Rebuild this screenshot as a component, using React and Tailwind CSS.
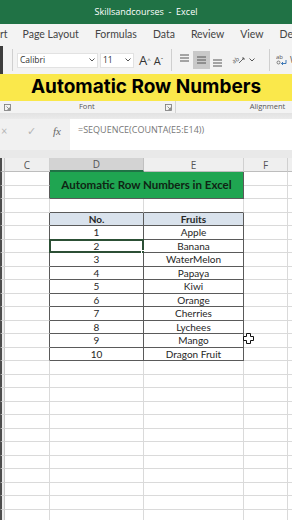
import React from "react";

const fruits = ["Apple", "Banana", "WaterMelon", "Papaya", "Kiwi", "Orange", "Cherries", "Lychees", "Mango", "Dragon Fruit"];
const ROWS = 26;

const isDark = (r, c) => (c === 2 || c === 3) && ((r >= 0 && r <= 1) || (r >= 3 && r <= 13));

const AlignIcon = ({ pos }) => {
  const ys = pos === "top" ? [2, 5, 8] : pos === "mid" ? [4, 7, 10] : [7, 10, 13];
  return (
    <svg width="11" height="15" viewBox="0 0 11 15">
      {ys.map((y, i) => (
        <line key={i} x1="1" x2="10" y1={y} y2={y} stroke="#555" strokeWidth="1" />
      ))}
    </svg>
  );
};

const Chevron = () => (
  <svg width="6" height="4" viewBox="0 0 6 4">
    <path d="M0.5 0.5 L3 3 L5.5 0.5" fill="none" stroke="#555" strokeWidth="1" />
  </svg>
);

const Launcher = () => (
  <svg width="7" height="7" viewBox="0 0 7 7">
    <rect x="0.5" y="0.5" width="6" height="6" fill="none" stroke="#777" strokeWidth="0.8" />
    <path d="M2.5 2.5 L5.5 5.5 M3.5 5.5 L5.5 5.5 L5.5 3.5" fill="none" stroke="#777" strokeWidth="0.8" />
  </svg>
);

const WrapIcon = () => (
  <svg width="12" height="14" viewBox="0 0 12 14">
    <text x="0" y="5.5" fontSize="6" fill="#555" fontFamily="Open Sans">ab</text>
    <path d="M1 9.5 Q1 8 2.5 8 Q4 8 4 9.5 Q4 11 2.5 11 Q1 11 1 9.5" fill="none" stroke="#555" strokeWidth="0.7" />
    <path d="M5.5 10.5 H10 V7" fill="none" stroke="#2b6cb0" strokeWidth="0.9" />
    <path d="M7 9 L5.5 10.5 L7 12" fill="none" stroke="#2b6cb0" strokeWidth="0.9" />
  </svg>
);

const CellCursor = () => (
  <svg width="11" height="11" viewBox="0 0 11 11">
    <path
      d="M3.5 0.5 H7.5 V3.5 H10.5 V7.5 H7.5 V10.5 H3.5 V7.5 H0.5 V3.5 H3.5 Z"
      fill="#fff"
      stroke="#111"
      strokeWidth="1"
    />
  </svg>
);

const Cell = ({ r, c }) => {
  if (c === 0) {
    return <div className="bg-[#ececec] border-l-2 border-l-[#4d4d4d] border-r border-r-[#c8c8c8] border-b border-b-[#d6d6d6]" />;
  }
  const right = isDark(r, c) || isDark(r, c + 1) ? "border-r-[#5a5a5a]" : "border-r-[#dadada]";
  const bottom = isDark(r, c) || isDark(r + 1, c) ? "border-b-[#5a5a5a]" : "border-b-[#dadada]";
  let bg = "bg-white";
  let text = null;
  let bold = "";
  if (r === 3 && (c === 2 || c === 3)) {
    bg = "bg-[#d9e2ec]";
    bold = "font-bold";
    text = c === 2 ? "No." : "Fruits";
  } else if (r >= 4 && r <= 13) {
    if (c === 2) text = r - 3;
    if (c === 3) text = fruits[r - 4];
  }
  return (
    <div
      className={`relative flex items-center justify-center border-b ${c < 5 ? "border-r" : ""} ${right} ${bottom} ${bg} ${bold} text-[10px] leading-none text-[#262626]`}
    >
      {text}
      {r === 5 && c === 2 && (
        <div className="absolute -left-px -top-px -right-px -bottom-px border-2 border-[#2c4f35]">
          <div className="absolute -right-[3px] -bottom-[3px] w-[4px] h-[4px] bg-[#2c4f35] border border-white" />
        </div>
      )}
      {r === 12 && c === 4 && (
        <div className="absolute left-[-1px] top-[-1px]">
          <CellCursor />
        </div>
      )}
    </div>
  );
};

export default function App() {
  const cells = [];
  for (let r = 0; r < ROWS; r++) {
    for (let c = 0; c < 6; c++) {
      if ((r === 0 || r === 1) && (c === 2 || c === 3)) {
        if (r === 0 && c === 2) {
          cells.push(
            <div
              key="title"
              className="col-span-2 row-span-2 flex items-center justify-center bg-[#1fa551] border-r border-b border-r-[#5a5a5a] border-b-[#5a5a5a] text-[11.5px] font-bold text-[#0f2414]"
            >
              Automatic Row Numbers in Excel
            </div>
          );
        }
        continue;
      }
      cells.push(<Cell key={`${r}-${c}`} r={r} c={c} />);
    }
  }

  return (
    <div className="w-[292px] h-[520px] overflow-hidden bg-white font-['Lato',sans-serif] flex flex-col">
      {/* title bar */}
      <div className="h-[24px] shrink-0 bg-[#207245] flex items-center justify-center text-white text-[9px] font-['Open_Sans',sans-serif]">
        Skillsandcourses&nbsp;&nbsp;-&nbsp;&nbsp;Excel
      </div>

      {/* tabs */}
      <div className="h-[22px] shrink-0 bg-[#f3f3f3] flex items-center whitespace-nowrap overflow-hidden text-[10.5px] text-[#444] font-['Lato',sans-serif] gap-[16px] *:shrink-0">
        <span>rt</span>
        <span className="ml-[-1px]">Page Layout</span>
        <span>Formulas</span>
        <span>Data</span>
        <span>Review</span>
        <span>View</span>
        <span>Developer</span>
      </div>

      {/* ribbon controls */}
      <div className="h-[28px] shrink-0 bg-[#f3f3f3] flex items-center border-l-[3px] border-l-[#3d3d3d] whitespace-nowrap overflow-hidden font-['Open_Sans',sans-serif] text-[#333] *:shrink-0">
        <div className="w-px h-[22px] bg-[#cfcfcf] ml-[9px]" />
        <div className="ml-[4px] w-[81px] h-[15px] bg-white border border-[#e2e2e2] flex items-center justify-between px-[2px] text-[8.5px]">
          <span>Calibri</span>
          <Chevron />
        </div>
        <div className="ml-[2px] w-[34px] h-[15px] bg-white border border-[#e2e2e2] flex items-center justify-between px-[2px] text-[8.5px]">
          <span>11</span>
          <Chevron />
        </div>
        <span className="ml-[5px] text-[13px] leading-none">A<sup className="text-[6px]">^</sup></span>
        <span className="ml-[3px] text-[11px] leading-none">A<sup className="text-[6px]">ˇ</sup></span>
        <div className="w-px h-[22px] bg-[#cfcfcf] ml-[8px]" />
        <div className="ml-[7px] flex items-center">
          <AlignIcon pos="top" />
        </div>
        <div className="ml-[3px] w-[17px] h-[18px] bg-[#c9c9c9] flex items-center justify-center">
          <AlignIcon pos="mid" />
        </div>
        <div className="ml-[2px] flex items-center">
          <AlignIcon pos="bot" />
        </div>
        <div className="ml-[9px] flex items-center gap-[3px]">
          <svg width="14" height="12" viewBox="0 0 14 12">
            <text x="0" y="8" fontSize="6" fill="#555" fontFamily="Open Sans" transform="rotate(-30 4 6)">ab</text>
            <path d="M7 9 L12 4 M10 4 L12 4 L12 6" fill="none" stroke="#555" strokeWidth="0.9" />
          </svg>
          <Chevron />
        </div>
        <div className="w-px h-[22px] bg-[#cfcfcf] ml-[14px]" />
        <div className="ml-[6px] flex items-center text-[#555]">
          <WrapIcon />
          <span className="ml-[2px] text-[9px]">Wrap</span>
        </div>
      </div>

      {/* yellow banner */}
      <div className="h-[27px] shrink-0 bg-[#fae84b] flex items-center justify-center font-['Inter',sans-serif] font-bold text-[19px] text-black">
        Automatic Row Numbers
      </div>

      {/* group labels */}
      <div className="h-[12px] shrink-0 bg-[#f3f3f3] flex items-center text-[7.5px] text-[#555] font-['Open_Sans',sans-serif] whitespace-nowrap *:shrink-0">
        <div className="ml-[4px]"><Launcher /></div>
        <span className="ml-[68px]">Font</span>
        <div className="ml-[70px]"><Launcher /></div>
        <div className="w-px h-[12px] bg-[#d4d4d4] ml-[3px]" />
        <span className="ml-[74px]">Alignment</span>
      </div>

      <div className="h-[6px] shrink-0 bg-gradient-to-b from-[#e2e2e2] to-[#ebebeb]" />

      {/* formula bar */}
      <div className="h-[31px] shrink-0 flex bg-[#ebebeb]">
        <div className="w-[70px] bg-[#f1f1f1] flex items-start pt-[4px] text-[#b5b5b5] text-[11px]">
          <span className="ml-[1px] w-[10px]">×</span>
          <span className="ml-[16px]">✓</span>
          <span className="ml-[17px] font-['Liberation_Serif',serif] italic text-[#666] text-[11px]">fx</span>
        </div>
        <div className="flex-1 bg-white pl-[8px] pt-[4px] text-[9px] text-[#777] font-['Open_Sans',sans-serif]">
          =SEQUENCE(COUNTA(E5:E14))
        </div>
      </div>

      <div className="h-[8px] shrink-0 bg-[#e9e9e9]" />

      {/* column headers */}
      <div className="h-[14px] shrink-0 grid grid-cols-[5px_45px_94px_100px_44px_1fr] bg-[#efefef] text-[10px] text-[#555] font-['Open_Sans',sans-serif] leading-none">
        <div className="border-l-2 border-l-[#4d4d4d] border-r border-r-[#c8c8c8] border-b border-b-[#bdbdbd]" />
        <div className="flex items-center justify-center border-r border-r-[#d0d0d0] border-b border-b-[#bdbdbd]">C</div>
        <div className="flex items-center justify-center bg-[#d3d3d3] border-r border-r-[#c0c0c0] border-b-2 border-b-[#207245]">D</div>
        <div className="flex items-center justify-center border-r border-r-[#d0d0d0] border-b border-b-[#bdbdbd]">E</div>
        <div className="flex items-center justify-center border-r border-r-[#d0d0d0] border-b border-b-[#bdbdbd]">F</div>
        <div className="border-b border-b-[#bdbdbd]" />
      </div>

      {/* grid */}
      <div className="grid grid-cols-[5px_45px_94px_100px_44px_1fr] auto-rows-[13.5px]">
        {cells}
      </div>
    </div>
  );
}
